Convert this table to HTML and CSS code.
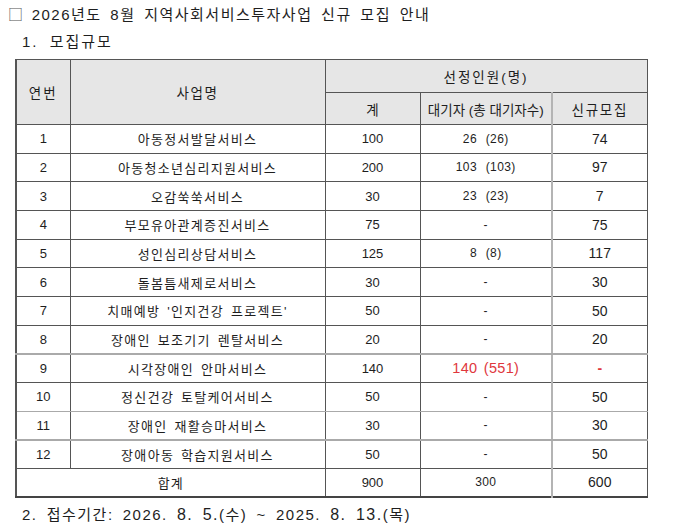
FILE: index.html
```html
<!DOCTYPE html>
<html lang="ko">
<head>
<meta charset="utf-8">
<title>2026년도 8월 지역사회서비스투자사업 신규 모집 안내</title>
<link rel="stylesheet" href="styles.css">
</head>
<body>
<div class="page">
  <h1 class="title"><span class="box">□</span> 2026년도 8월 지역사회서비스투자사업 신규 모집 안내</h1>
  <h2 class="sub">1. 모집규모</h2>
  <table class="grid">
    <colgroup>
      <col class="c-no"><col class="c-name"><col class="c-total"><col class="c-wait"><col class="c-new">
    </colgroup>
    <thead>
      <tr class="h1">
        <th rowspan="2" class="h-no">연번</th>
        <th rowspan="2" class="h-name">사업명</th>
        <th colspan="3" class="h-sel">선정인원(명)</th>
      </tr>
      <tr class="h2">
        <th>계</th>
        <th class="wait-h">대기자 (총 대기자수)</th>
        <th class="h-new">신규모집</th>
      </tr>
    </thead>
    <tbody>
      <tr><td>1</td><td class="name">아동정서발달서비스</td><td class="tot">100</td><td class="wait">26 (26)</td><td class="new">74</td></tr>
      <tr><td>2</td><td class="name">아동청소년심리지원서비스</td><td class="tot">200</td><td class="wait">103 (103)</td><td class="new">97</td></tr>
      <tr><td>3</td><td class="name">오감쑥쑥서비스</td><td class="tot">30</td><td class="wait">23 (23)</td><td class="new">7</td></tr>
      <tr><td>4</td><td class="name">부모유아관계증진서비스</td><td class="tot">75</td><td class="wait">-</td><td class="new">75</td></tr>
      <tr><td>5</td><td class="name">성인심리상담서비스</td><td class="tot">125</td><td class="wait">8 (8)</td><td class="new">117</td></tr>
      <tr><td>6</td><td class="name">돌봄틈새제로서비스</td><td class="tot">30</td><td class="wait">-</td><td class="new">30</td></tr>
      <tr><td>7</td><td class="name">치매예방 '인지건강 프로젝트'</td><td class="tot">50</td><td class="wait">-</td><td class="new">50</td></tr>
      <tr class="thick"><td>8</td><td class="name">장애인 보조기기 렌탈서비스</td><td class="tot">20</td><td class="wait">-</td><td class="new">20</td></tr>
      <tr><td>9</td><td class="name">시각장애인 안마서비스</td><td class="tot">140</td><td class="wait red">140 (551)</td><td class="new red dash">-</td></tr>
      <tr class="light"><td>10</td><td class="name">정신건강 토탈케어서비스</td><td class="tot">50</td><td class="wait">-</td><td class="new">50</td></tr>
      <tr class="thick"><td>11</td><td class="name">장애인 재활승마서비스</td><td class="tot">30</td><td class="wait">-</td><td class="new">30</td></tr>
      <tr><td>12</td><td class="name">장애아동 학습지원서비스</td><td class="tot">50</td><td class="wait">-</td><td class="new">50</td></tr>
      <tr class="sum"><td colspan="2" class="sum-label">합계</td><td class="tot">900</td><td class="wait small">300</td><td class="new">600</td></tr>
    </tbody>
  </table>
  <p class="period">2. 접수기간: 2026. <span class="big">8. 5.</span>(수) ~ 2025. <span class="big">8. 13.</span>(목)</p>
</div>
</body>
</html>
```

FILE: styles.css
```css
html, body {
  margin: 0;
  padding: 0;
  background: #ffffff;
}

body {
  font-family: "Liberation Sans", "Noto Sans CJK KR", sans-serif;
  color: #1e1e1e;
}

.page {
  padding: 4px 0 0 8px;
}

.title {
  margin: 0;
  font-size: 15px;
  font-weight: normal;
  line-height: 19px;
  letter-spacing: 1.5px;
  word-spacing: 3px;
}

.title .box {
  font-family: "Noto Sans CJK KR", sans-serif;
  color: #555;
  letter-spacing: 0;
}

.sub {
  margin: 8px 0 0 14px;
  font-size: 15px;
  font-weight: normal;
  line-height: 19px;
  letter-spacing: 2px;
  word-spacing: 5px;
}

.grid {
  margin: 8px 0 0 7px;
  border-collapse: collapse;
  table-layout: fixed;
  width: 631px;
  border-top: 1px solid #666;
  border-left: 2px solid #555;
  border-right: 1px solid #555;
  border-bottom: 2px solid #444;
  font-size: 13px;
}

.c-no { width: 54px; }
.c-name { width: 255px; }
.c-total { width: 95px; }
.c-wait { width: 132px; }
.c-new { width: 95px; }

.grid th,
.grid td {
  padding: 0;
  text-align: center;
  vertical-align: middle;
  border: 1px solid #555;
  font-weight: normal;
  white-space: nowrap;
}

.grid thead th {
  background: #e6e6e6;
  font-size: 13.5px;
}

.grid .h-no { letter-spacing: 2px; }
.grid .h-name { letter-spacing: 1.5px; }
.grid .h-sel { letter-spacing: 2px; }
.grid .h-new { letter-spacing: 1.7px; }

.grid tr.h1 { height: 33px; }
.grid tr.h2 { height: 32px; }

.grid .wait-h {
  border-right: 2px solid #b4b4b4;
}

.grid tbody tr { height: 28.67px; }

.grid td.wait {
  border-right: 2px solid #b4b4b4;
  font-size: 12px;
  letter-spacing: 0.4px;
  word-spacing: 5px;
}

.grid td.name {
  letter-spacing: 1.3px;
  word-spacing: 2px;
}

.grid td.sum-label {
  letter-spacing: 1px;
}

.grid td.tot {
  font-size: 13px;
}

.grid td.new {
  font-size: 14px;
}

.grid tr.thick td {
  border-bottom: 2px solid #aaa;
}

.grid tr.light td {
  border-bottom-color: #aaa;
}

.grid td.red {
  color: #e0373d;
  font-size: 14px;
}

.grid td.dash {
  font-weight: bold;
}

.grid td.small {
  font-size: 12px;
}

.grid td.wait.red {
  font-size: 14.5px;
  letter-spacing: 0.3px;
  word-spacing: 2px;
}

.period {
  margin: 7px 0 0 14px;
  font-size: 15px;
  line-height: 19px;
  letter-spacing: 1.5px;
  word-spacing: 3.5px;
}

.period .big {
  font-size: 16px;
}
```
